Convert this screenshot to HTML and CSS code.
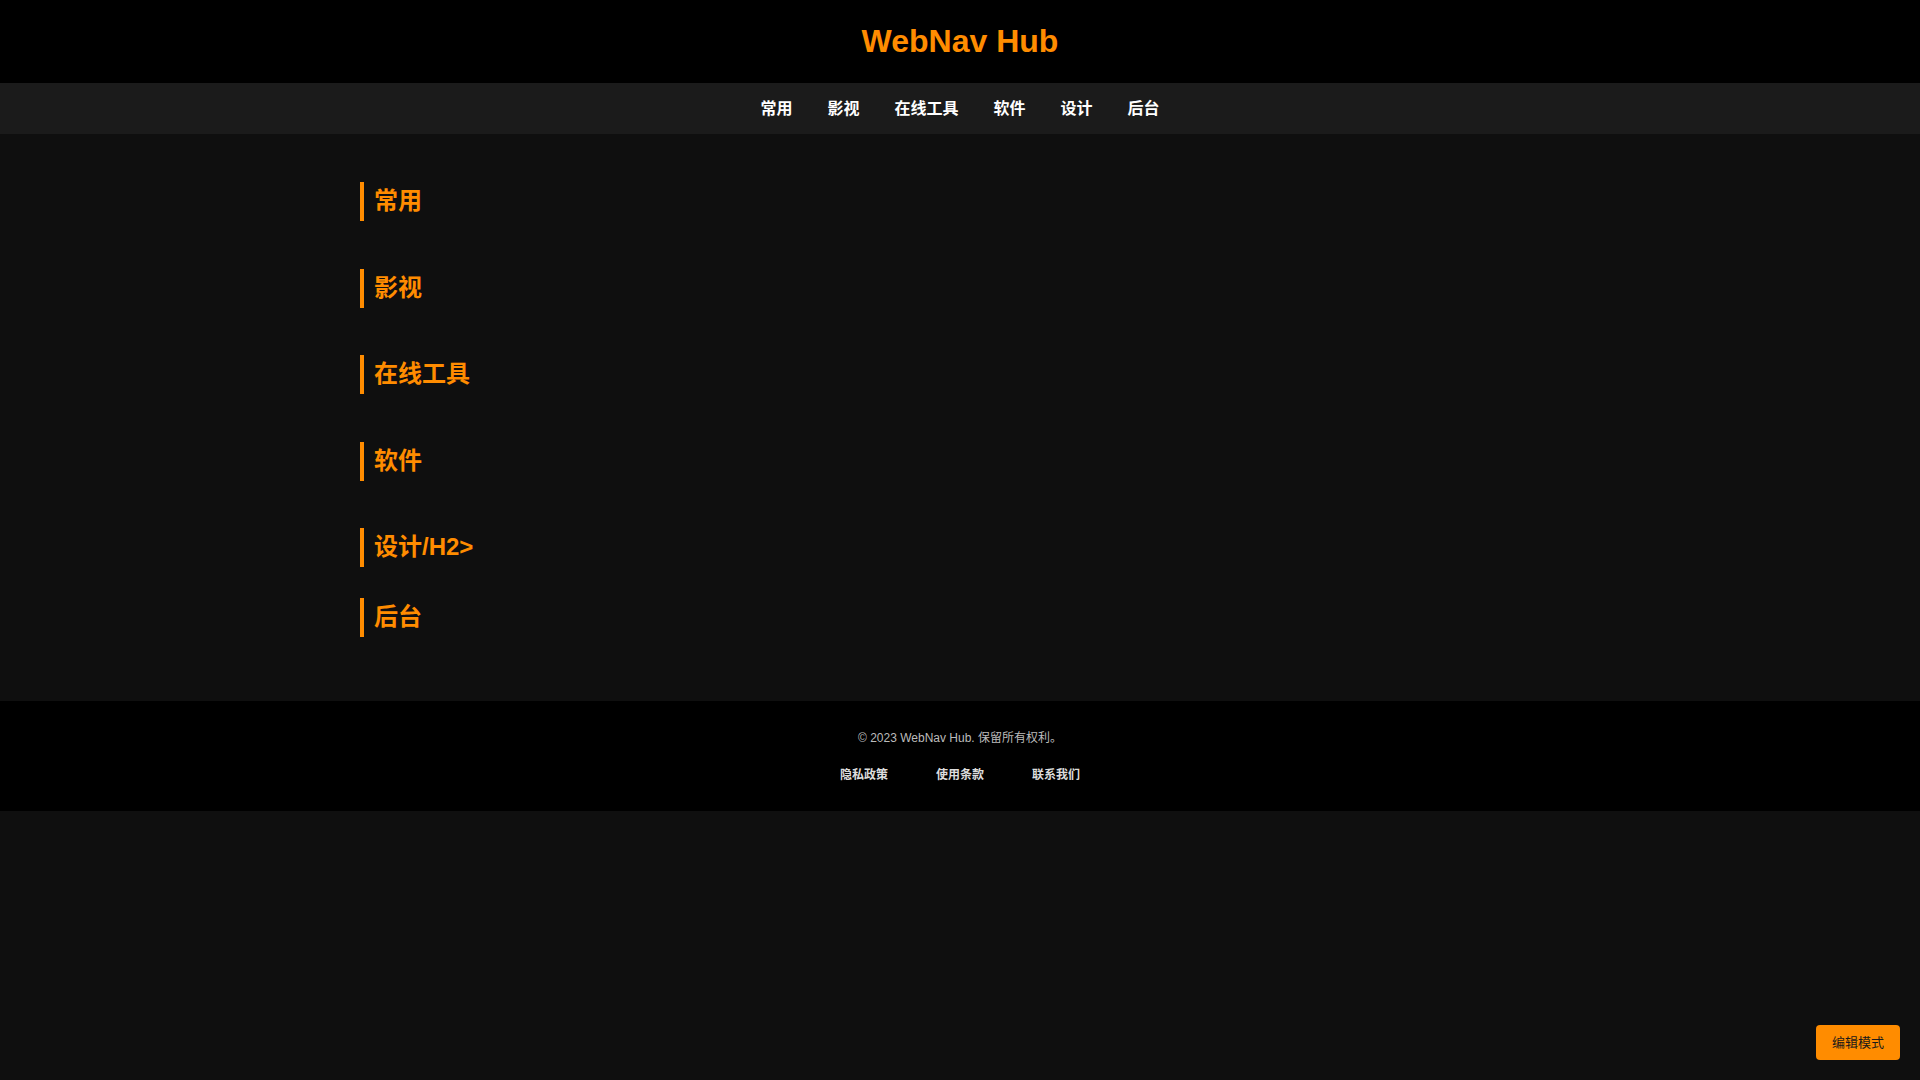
FILE: index.html
```html
<!doctype html>
<html lang="zh-CN">
    <head>
        <meta charset="UTF-8" />
        <meta name="viewport" content="width=device-width, initial-scale=1.0" />
        <title>WebNav Hub</title>
        <link rel="stylesheet" href="styles.css">
    </head>
    <body>
        <header class="site-header">
            <h1>WebNav Hub</h1>
        </header>

        <!-- Category navigation -->
        <nav class="site-nav">
            <a href="#common">常用</a>
            <a href="#video">影视</a>
            <a href="#tools">在线工具</a>
            <a href="#software">软件</a>
            <a href="#design">设计</a>
            <a href="#admin">后台</a>
        </nav>

        <main class="container">
            <section class="category" id="common">
                <h2>常用</h2>
                <div class="links"></div>
            </section>
            <section class="category" id="video">
                <h2>影视</h2>
                <div class="links"></div>
            </section>
            <section class="category" id="tools">
                <h2>在线工具</h2>
                <div class="links"></div>
            </section>
            <section class="category" id="software">
                <h2>软件</h2>
                <div class="links"></div>
            </section>
            <section class="category category-tight" id="design">
                <h2>设计/H2&gt;</h2>
                <div class="links"></div>
            </section>
            <section class="category" id="admin">
                <h2>后台</h2>
                <div class="links"></div>
            </section>
        </main>

        <footer class="site-footer">
            <p>&copy; 2023 WebNav Hub. 保留所有权利。</p>
            <div class="footer-links">
                <a href="#">隐私政策</a>
                <a href="#">使用条款</a>
                <a href="#">联系我们</a>
            </div>
        </footer>

        <button class="edit-btn" type="button">编辑模式</button>
    </body>
</html>
```

FILE: styles.css
```css
/* Basic styling */
body {
    font-family: "Liberation Sans", Arial, "Noto Sans CJK SC", sans-serif;
    background-color: #0f0f0f;
    color: #fff;
    margin: 0;
}
a {
    text-decoration: none;
}

.site-header {
    background-color: #000;
    padding: 23px 0;
    text-align: center;
}
.site-header h1 {
    margin: 0;
    font-size: 32px;
    line-height: 37px;
    color: #ff8c00;
}

.site-nav {
    background-color: #1b1b1b;
    display: flex;
    justify-content: center;
    gap: 35px;
    height: 51px;
    align-items: center;
}
.site-nav a {
    color: #fff;
    font-size: 16px;
    font-weight: bold;
    line-height: 20px;
}

.container {
    max-width: 1200px;
    margin: 0 auto;
    padding: 48px 0 64px;
}
.category {
    margin-bottom: 47.5px;
}
.category:last-child {
    margin-bottom: 0;
}
.category-tight {
    margin-bottom: 31px;
}
.category h2 {
    margin: 0;
    border-left: 4px solid #ff8c00;
    padding-left: 10px;
    font-size: 24px;
    line-height: 38px;
    height: 39px;
    color: #ff8c00;
}

.site-footer {
    background-color: #000;
    text-align: center;
    padding: 29px 0 28px;
}
.site-footer p {
    margin: 0;
    font-size: 12px;
    line-height: 16px;
    color: #bbb;
}
.footer-links {
    margin-top: 21px;
    display: flex;
    justify-content: center;
    gap: 48px;
}
.footer-links a {
    color: #ddd;
    font-size: 12px;
    font-weight: bold;
    line-height: 16px;
}

.edit-btn {
    position: fixed;
    right: 20px;
    bottom: 20px;
    background-color: #ff8c00;
    color: #1a1a1a;
    border: none;
    border-radius: 4px;
    padding: 8px 16px;
    font-family: inherit;
    font-size: 13px;
    line-height: 19px;
    cursor: pointer;
}
```
